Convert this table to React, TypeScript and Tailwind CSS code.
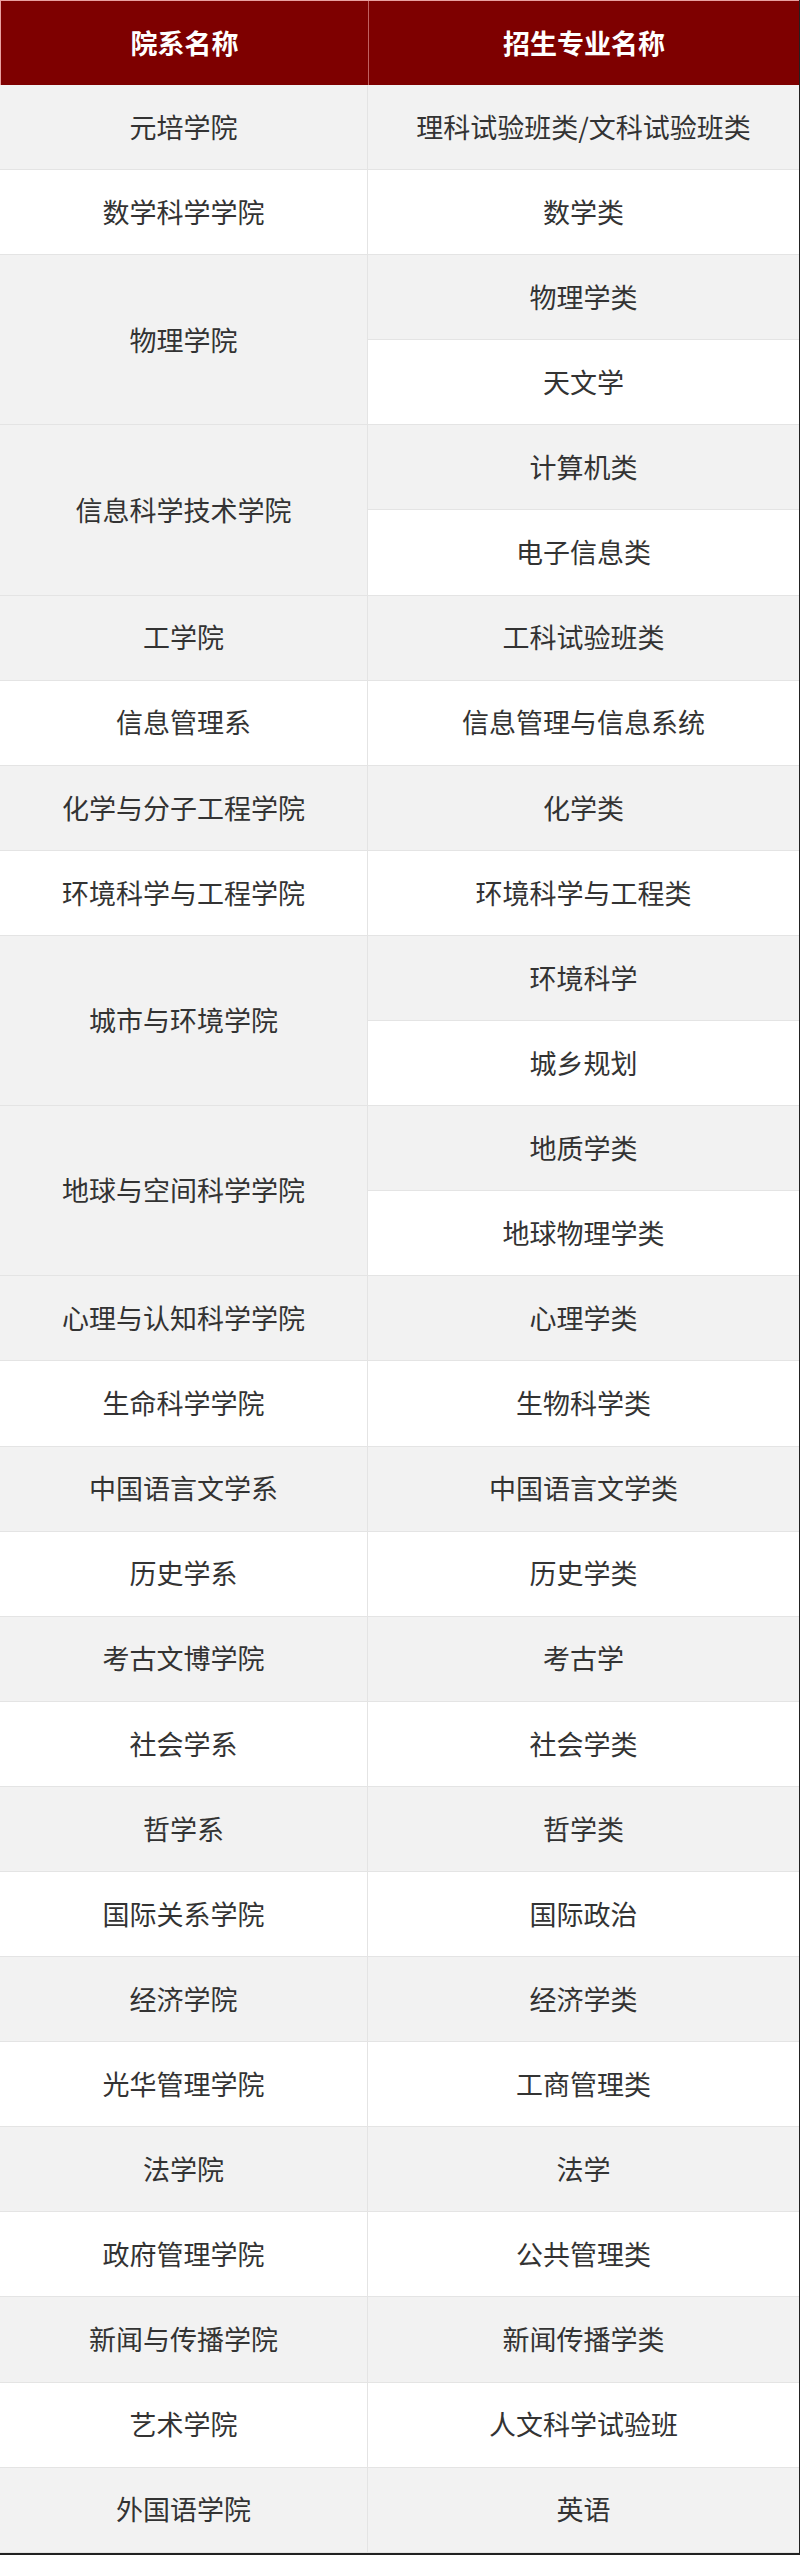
type Row = { dept?: string; span?: number; major: string }

const rows: Row[] = [
  { dept: "元培学院", major: "理科试验班类/文科试验班类" },
  { dept: "数学科学学院", major: "数学类" },
  { dept: "物理学院", span: 2, major: "物理学类" },
  { major: "天文学" },
  { dept: "信息科学技术学院", span: 2, major: "计算机类" },
  { major: "电子信息类" },
  { dept: "工学院", major: "工科试验班类" },
  { dept: "信息管理系", major: "信息管理与信息系统" },
  { dept: "化学与分子工程学院", major: "化学类" },
  { dept: "环境科学与工程学院", major: "环境科学与工程类" },
  { dept: "城市与环境学院", span: 2, major: "环境科学" },
  { major: "城乡规划" },
  { dept: "地球与空间科学学院", span: 2, major: "地质学类" },
  { major: "地球物理学类" },
  { dept: "心理与认知科学学院", major: "心理学类" },
  { dept: "生命科学学院", major: "生物科学类" },
  { dept: "中国语言文学系", major: "中国语言文学类" },
  { dept: "历史学系", major: "历史学类" },
  { dept: "考古文博学院", major: "考古学" },
  { dept: "社会学系", major: "社会学类" },
  { dept: "哲学系", major: "哲学类" },
  { dept: "国际关系学院", major: "国际政治" },
  { dept: "经济学院", major: "经济学类" },
  { dept: "光华管理学院", major: "工商管理类" },
  { dept: "法学院", major: "法学" },
  { dept: "政府管理学院", major: "公共管理类" },
  { dept: "新闻与传播学院", major: "新闻传播学类" },
  { dept: "艺术学院", major: "人文科学试验班" },
  { dept: "外国语学院", major: "英语" },
]

const cell = "flex items-center justify-center border-b border-[#e4e4e4] text-[27px] text-[#333333]"

export default function App() {
  return (
    <div
      className="w-[800px] h-[2555px] bg-white border-r border-b-2 border-[#222222]"
      style={{ fontFamily: '"Noto Sans CJK SC", "Noto Sans", sans-serif' }}
    >
      <div className="grid grid-cols-[368px_1fr] h-[85px] bg-[#7e0000] border-t border-l border-[#e8a0a0] text-white text-[27px] font-bold">
        <div className="flex items-center justify-center border-r border-[#c06060]">院系名称</div>
        <div className="flex items-center justify-center">招生专业名称</div>
      </div>
      <div className="grid grid-cols-[368px_1fr] auto-rows-[85.1px]">
        {rows.map((r, i) => {
          const bg = i % 2 === 0 ? "bg-[#f2f2f2]" : "bg-white"
          return [
            r.dept ? (
              <div
                key={`d${i}`}
                className={`${cell} ${bg} border-r ${r.span === 2 ? "row-span-2" : ""}`}
              >
                {r.dept}
              </div>
            ) : null,
            <div key={`m${i}`} className={`${cell} ${bg} col-start-2`}>
              {r.major}
            </div>,
          ]
        })}
      </div>
    </div>
  )
}
